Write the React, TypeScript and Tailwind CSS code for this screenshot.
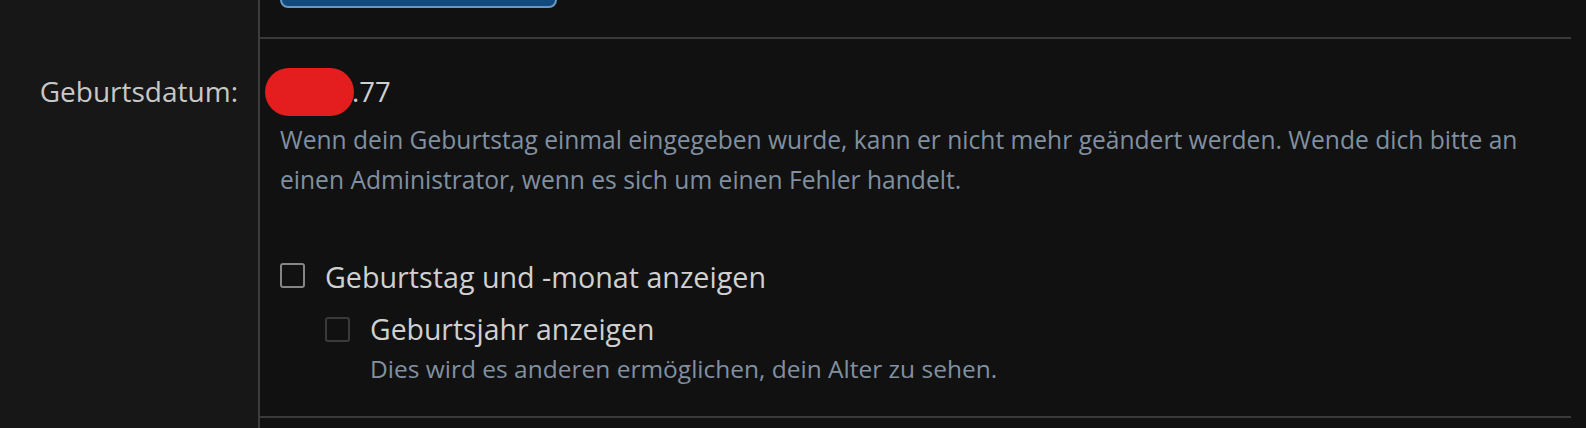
import React from "react";

const font = { fontFamily: "'Open Sans', 'Noto Sans', sans-serif" };

function Checkbox({ disabled }: { disabled?: boolean }) {
  return (
    <span
      className={`block w-[25px] h-[25px] shrink-0 rounded-[3px] border-2 bg-[#111111] ${
        disabled ? "border-[#3a3a3a]" : "border-[#858585]"
      }`}
    />
  );
}

export default function App() {
  return (
    <div
      className="h-[428px] w-full overflow-hidden bg-[#111111] text-[#cccccc]"
      style={font}
    >
      {/* previous row: only the bottom of its button is visible */}
      <div className="flex">
        <div className="w-[260px] shrink-0 bg-[#171717] border-r-2 border-[#3c3c3c]" />
        <div className="flex-1 mr-[15px] pl-[20px] pb-[29px] border-b-2 border-[#3a3a3a]">
          <div className="-mt-[32px] h-[40px] w-[277px] rounded-[8px] border-2 border-[#6a98c4] bg-[#114a7e]" />
        </div>
      </div>

      {/* birthday row */}
      <div className="flex">
        <div className="w-[260px] shrink-0 bg-[#171717] border-r-2 border-[#3c3c3c] pt-[32px] pr-[20px] text-right">
          <div className="text-[28px] leading-[41px] text-[#c8c8c8]">Geburtsdatum:</div>
        </div>
        <div className="flex-1 mr-[15px] pl-[20px] pt-[32px] pb-[29px] border-b-2 border-[#3a3a3a]">
          <div className="flex items-center h-[41px] text-[27.5px] text-[#d0d0d0]">
            <span className="block -ml-[15px] w-[89px] h-[48px] shrink-0 rounded-full bg-[#e41d1f]" />
            <span className="-ml-[2px]">.77</span>
          </div>
          <p className="mt-[8px] text-[24.6px] leading-[40px] text-[#8190a0]">
            Wenn dein Geburtstag einmal eingegeben wurde, kann er nicht mehr geändert werden. Wende dich bitte an
            <br />
            einen Administrator, wenn es sich um einen Fehler handelt.
          </p>

          <div className="mt-[57px]">
            <label className="flex items-start gap-[20px]">
              <span className="mt-[6px]">
                <Checkbox />
              </span>
              <span className="text-[28.7px] leading-[40px] text-[#d0d0d0]">
                Geburtstag und -monat anzeigen
              </span>
            </label>
            <div className="mt-[12px] pl-[45px]">
              <label className="flex items-start gap-[20px]">
                <span className="mt-[8px]">
                  <Checkbox disabled />
                </span>
                <span>
                  <span className="block text-[28.4px] leading-[40px] text-[#d0d0d0]">
                    Geburtsjahr anzeigen
                  </span>
                  <span className="block mt-[2px] text-[24.5px] leading-[36px] text-[#8190a0]">
                    Dies wird es anderen ermöglichen, dein Alter zu sehen.
                  </span>
                </span>
              </label>
            </div>
          </div>
        </div>
      </div>

      {/* next row */}
      <div className="flex h-[80px]">
        <div className="w-[260px] shrink-0 bg-[#171717] border-r-2 border-[#3c3c3c]" />
        <div className="flex-1" />
      </div>
    </div>
  );
}
